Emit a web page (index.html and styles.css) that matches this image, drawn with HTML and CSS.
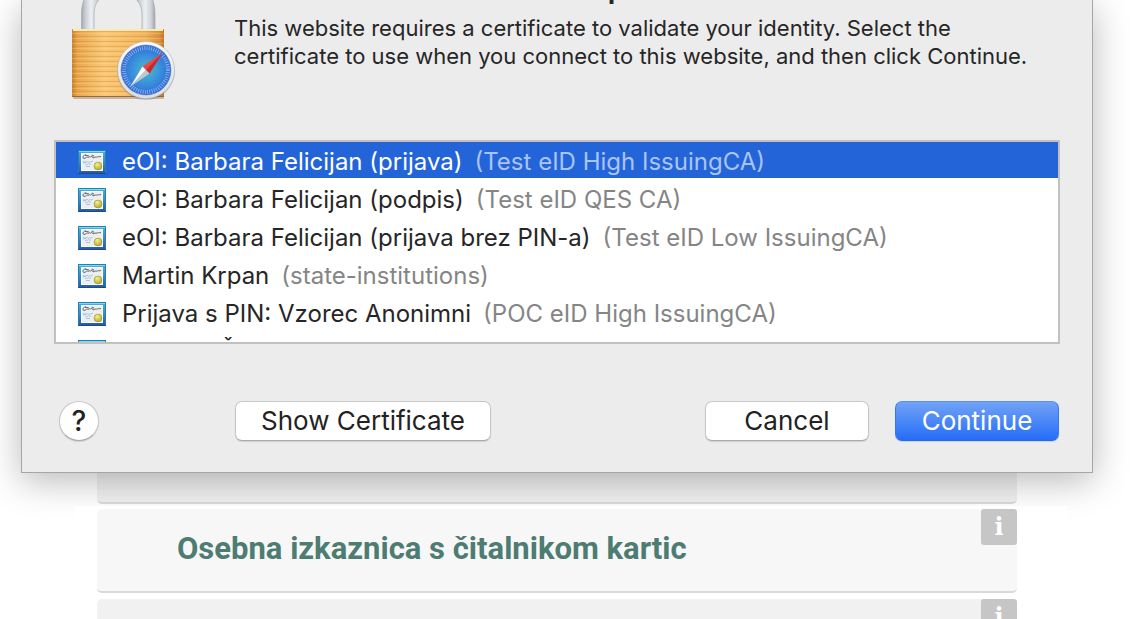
FILE: index.html
```html
<!DOCTYPE html>
<html lang="sl">
<head>
    <meta charset="UTF-8">
    <meta name="viewport" content="width=device-width, initial-scale=1.0">
    <title>Osebna izkaznica</title>
    <link rel="stylesheet" href="styles.css">
</head>
<body>
    <!-- shared certificate icon -->
    <svg class="defs" width="0" height="0" aria-hidden="true">
        <defs>
            <linearGradient id="certFrame" x1="0" y1="0" x2="0" y2="1">
                <stop offset="0" stop-color="#48b4dc"/>
                <stop offset="0.5" stop-color="#3989c9"/>
                <stop offset="1" stop-color="#2455a4"/>
            </linearGradient>
            <radialGradient id="certSeal" cx="0.4" cy="0.3" r="0.7">
                <stop offset="0" stop-color="#f4f08b"/>
                <stop offset="1" stop-color="#b6ab2b"/>
            </radialGradient>
            <symbol id="cert" viewBox="0 0 28 24">
                <rect width="28" height="24" fill="url(#certFrame)"/>
                <path d="M0.5 23.5V0.5h27v23" fill="none" stroke="#247fae"/>
                <path d="M1 1.5h26" stroke="#7bdcf2"/>
                <path d="M0 23.5h28" stroke="#204887"/>
                <rect x="3" y="3" width="22" height="18" fill="#fff"/>
                <rect x="4" y="4" width="20" height="16" fill="#eceeef"/>
                <path d="M8 5c-3 0-4 3-2 3.500 2 0 2-1.500 3-1.500s1 1 2 0 1 .5 2 0 1-2.500 2-2-1 3 0 3 1-1 2-1 1 .5 2 0 2 0 4-.5M7 5l4 1" fill="none" stroke="#55585a" stroke-width="0.9"/>
                <path d="M5 12c1-2 2 2 3 0s2 1 3 0 2 1 4-1M7 15c2-2 2 0 3-1s1 1 3 0M5 13l3-1M8 16.500h4" fill="none" stroke="#6aa1d8" stroke-width="0.7" opacity="0.8"/>
                <circle cx="20" cy="16" r="4" fill="url(#certSeal)" stroke="#999431" stroke-width="0.6"/>
            </symbol>
        </defs>
    </svg>

    <section class="dialog" role="dialog" aria-label="Certificate">
        <header class="dialog-header">
            <svg class="lock" width="108" height="104" viewBox="0 0 108 104" aria-hidden="true">
                <defs>
                    <linearGradient id="body" x1="0" y1="0" x2="1" y2="0">
                        <stop offset="0" stop-color="#c8802f"/>
                        <stop offset="0.06" stop-color="#e9a74d"/>
                        <stop offset="0.35" stop-color="#fac878"/>
                        <stop offset="0.8" stop-color="#f1b458"/>
                        <stop offset="0.95" stop-color="#dc9440"/>
                        <stop offset="1" stop-color="#bd7325"/>
                    </linearGradient>
                    <linearGradient id="steel" x1="0" y1="0" x2="1" y2="0">
                        <stop offset="0" stop-color="#a4a8ad"/>
                        <stop offset="0.2" stop-color="#c9cdd3"/>
                        <stop offset="0.5" stop-color="#eceff3"/>
                        <stop offset="0.8" stop-color="#cfd3d9"/>
                        <stop offset="1" stop-color="#a2a6ab"/>
                    </linearGradient>
                    <radialGradient id="dial">
                        <stop offset="0" stop-color="#4bbbc6"/>
                        <stop offset="0.55" stop-color="#3992dc"/>
                        <stop offset="1" stop-color="#3268d8"/>
                    </radialGradient>
                    <linearGradient id="rim" x1="0" y1="0" x2="0" y2="1">
                        <stop offset="0" stop-color="#fafafa"/>
                        <stop offset="1" stop-color="#dcddde"/>
                    </linearGradient>
                    <pattern id="ribs" width="4" height="5" patternUnits="userSpaceOnUse">
                        <rect width="4" height="1" y="1" fill="#ca7c27" opacity="0.32"/>
                        <rect width="4" height="1" y="3" fill="#ffe2a5" opacity="0.25"/>
                    </pattern>
                </defs>
                <path d="M9.500 30V14c0-6 1-11 3-16h16c-5 5-6.500 10-6.500 16v16z" fill="url(#steel)" stroke="#a5a9ae" stroke-width="0.7"/>
                <path d="M83 30V14c0-6-1-11-3-16H63c5 5 7 10 7 16v16z" fill="url(#steel)" stroke="#a5a9ae" stroke-width="0.7"/>
                <rect x="1" y="95" width="91" height="4" rx="1" fill="#65401d" opacity="0.3"/>
                <rect y="29" width="92" height="68" rx="1" fill="url(#body)"/>
                <rect y="31" width="92" height="64" fill="url(#ribs)"/>
                <path d="M1 30h90" stroke="#fee8b6" stroke-width="2"/>
                <path d="M0 96.500h92" stroke="#a66323"/>
                <circle cx="74" cy="71" r="29" fill="#525457" opacity="0.3"/>
                <circle cx="74" cy="70" r="28.500" fill="url(#rim)" stroke="#b6b9bc" stroke-width="0.6"/>
                <circle cx="74" cy="70" r="25" fill="url(#dial)" stroke="#4b75bb" stroke-width="0.5"/>
                <circle cx="74" cy="70" r="22" fill="none" stroke="#b7dcf7" stroke-width="4" stroke-dasharray="0.8 1.504" opacity="0.7"/>
                <path d="M90.500 53L70.500 66.500l7 7z" fill="#ee4741"/>
                <path d="M90.500 53L77.500 73.500l-3.500-3.500z" fill="#c22b2b"/>
                <path d="M58 87l12.500-20.500 3.500 3.500z" fill="#fafafa"/>
                <path d="M58 87l16-17 3.500 3.500z" fill="#c3c6ca"/>
            </svg>
            <div class="dialog-text">
                <h1 class="dialog-title">p</h1>
                <p>This website requires a certificate to validate your identity. Select the certificate to use when you connect to this website, and then click Continue.</p>
            </div>
        </header>

        <div class="cert-box">
            <ul class="cert-list" role="listbox" aria-label="Certificates">
                <li class="cert selected" role="option" aria-selected="true">
                    <svg width="28" height="24" aria-hidden="true"><use href="#cert"/></svg>
                    <span>eOI: Barbara Felicijan (prijava)</span>
                    <span class="issuer">(Test eID High IssuingCA)</span>
                </li>
                <li class="cert" role="option">
                    <svg width="28" height="24" aria-hidden="true"><use href="#cert"/></svg>
                    <span>eOI: Barbara Felicijan (podpis)</span>
                    <span class="issuer">(Test eID QES CA)</span>
                </li>
                <li class="cert" role="option">
                    <svg width="28" height="24" aria-hidden="true"><use href="#cert"/></svg>
                    <span>eOI: Barbara Felicijan (prijava brez PIN-a)</span>
                    <span class="issuer">(Test eID Low IssuingCA)</span>
                </li>
                <li class="cert" role="option">
                    <svg width="28" height="24" aria-hidden="true"><use href="#cert"/></svg>
                    <span>Martin Krpan</span>
                    <span class="issuer">(state-institutions)</span>
                </li>
                <li class="cert" role="option">
                    <svg width="28" height="24" aria-hidden="true"><use href="#cert"/></svg>
                    <span>Prijava s PIN: Vzorec Anonimni</span>
                    <span class="issuer">(POC eID High IssuingCA)</span>
                </li>
                <li class="cert" role="option">
                    <svg width="28" height="24" aria-hidden="true"><use href="#cert"/></svg>
                    <span>Romana Š</span>
                </li>
            </ul>
        </div>

        <footer class="dialog-buttons">
            <button class="btn help" type="button" aria-label="Help">?</button>
            <button class="btn show" type="button">Show Certificate</button>
            <button class="btn" type="button">Cancel</button>
            <button class="btn primary" type="button">Continue</button>
        </footer>
    </section>

    <main>
        <div class="method covered"></div>
        <div class="methods">
            <article class="method">
                <h2><a href="#">Osebna izkaznica s čitalnikom kartic</a></h2>
                <button class="info" type="button" aria-label="Info">i</button>
            </article>
            <article class="method next">
                <button class="info" type="button" aria-label="Info">i</button>
            </article>
        </div>
    </main>
</body>
</html>
```
FILE: styles.css
```css
* {
    box-sizing: border-box;
}
html {
    height: 100%;
    overflow: hidden;
}
body {
    height: 100%;
    margin: 0;
    padding: 0 40px 0 21px;
    overflow: hidden;
    background: #fff;
    color: #262626;
    font-family: Inter, "Liberation Sans", sans-serif;
}
h1, h2, p, ul {
    margin: 0;
    padding: 0;
}
button {
    font-family: inherit;
    cursor: pointer;
}
.defs {
    display: block;
}

/* certificate sheet */
.dialog {
    position: relative;
    z-index: 1;
    padding: 0 32px 31px;
    background: #ececec;
    border: 1px solid #a6a6a6;
    border-top: 0;
    box-shadow: 0 8px 34px rgba(0, 0, 0, 0.28);
}
.dialog-header {
    display: flex;
    gap: 54px;
    height: 140px;
    padding-left: 18px;
}
.lock {
    flex: none;
}
.dialog-text {
    flex: 1;
    max-width: 812px;
    font-size: 22px;
    line-height: 28px;
}
.dialog-title {
    margin: -24px 0 10px;
    padding-left: 374px;
    font-size: 26px;
    line-height: 28px;
}
.cert-box {
    height: 204px;
    overflow: hidden;
    background: #fff;
    border: 2px solid #c1c1c1;
}
.cert-list {
    margin-top: -2px;
    list-style: none;
}
.cert {
    display: flex;
    align-items: center;
    gap: 12px;
    height: 38px;
    padding: 5px 22px 0;
    font-size: 24px;
    white-space: nowrap;
}
.cert svg {
    margin-right: 4px;
}
.issuer {
    color: #858585;
}
.selected {
    background: #2464d9;
    color: #fff;
}
.selected .issuer {
    color: #a9c4f3;
}

/* bottom buttons */
.dialog-buttons {
    display: flex;
    gap: 26px;
    padding: 57px 1px 0 5px;
}
.btn {
    width: 164px;
    height: 40px;
    padding: 0;
    background: #fff;
    color: #222;
    border: 1px solid #c7c7c7;
    border-bottom-color: #aaa;
    border-radius: 7px;
    box-shadow: 0 1px 1px rgba(0, 0, 0, 0.12);
    font-size: 26px;
    line-height: 38px;
}
.help {
    width: 40px;
    margin-right: 110px;
    border-radius: 50%;
    font-size: 28px;
    font-weight: 500;
}
.show {
    width: 256px;
    margin-right: auto;
}
.primary {
    background: linear-gradient(#71a2f5, #256df8);
    color: #fff;
    border-color: #5c91ed #3978ed #2468ef;
}

/* page under the sheet */
.method {
    display: flex;
    align-items: flex-start;
    max-width: 920px;
    height: 84px;
    margin: 0 auto;
    background: #f7f7f7;
    border-bottom: 2px solid #d9d9d9;
    border-radius: 5px;
}
.covered {
    height: 31px;
    background: #f1f1f1;
    border-radius: 0 0 5px 5px;
}
.methods {
    position: relative;
    z-index: 2;
    margin: 2px 26px 0 54px;
    padding: 3px 50px 0 22px;
    background: #fff;
}
.method h2 {
    padding-left: 80px;
    font-family: Roboto, sans-serif;
    font-size: 31px;
    line-height: 80px;
    white-space: nowrap;
}
.method a {
    color: #4d7c72;
    text-decoration: none;
}
.next {
    margin-top: 6px;
    background: #f1f1f1;
}
.info {
    width: 36px;
    height: 36px;
    margin-left: auto;
    padding: 0;
    background: #c6c6c6;
    color: #fff;
    border: 0;
    border-radius: 3px;
    font: bold 24px/32px "DejaVu Serif", serif;
}
```
